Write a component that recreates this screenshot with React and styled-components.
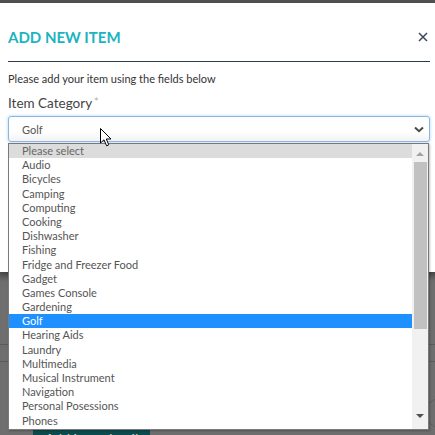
import React from "react";
import styled, { createGlobalStyle } from "styled-components";

const GlobalStyle = createGlobalStyle`
  html, body { margin: 0; padding: 0; }
  body {
    background: #6e6e6e;
    font-family: Lato, "Open Sans", "Liberation Sans", sans-serif;
  }
  * { box-sizing: border-box; }
`;

const Page = styled.div`
  position: relative;
  width: 435px;
  height: 435px;
  overflow: hidden;
  background: #6e6e6e;
`;

const TopStrip = styled.div`
  height: 3px;
  background: #535353;
`;

const Modal = styled.div`
  background: #ffffff;
  height: 269px;
  padding: 0 5px 0 8px;
  display: flex;
  flex-direction: column;
  box-shadow: 0 3px 8px rgba(0, 0, 0, 0.35);
  position: relative;
  z-index: 1;
`;

const Header = styled.div`
  display: flex;
  align-items: center;
  justify-content: space-between;
  height: 59px;
  padding-top: 9px;
  border-bottom: 1.5px solid #2f3b50;
`;

const Title = styled.h2`
  margin: 0;
  font-size: 15px;
  font-weight: 700;
  color: #1cb3c0;
  letter-spacing: 0;
`;

const Close = styled.button`
  border: 0;
  background: none;
  padding: 0;
  margin-right: 2px;
  width: 10px;
  height: 10px;
  display: flex;
  color: #3c4658;
`;

const Intro = styled.p`
  margin: 10px 0 0;
  font-size: 11px;
  color: #333;
`;

const Label = styled.div`
  margin-top: 10px;
  font-size: 13.5px;
  color: #444;
  display: flex;
  align-items: flex-start;
  gap: 2px;
`;

const Req = styled.span`
  font-size: 11px;
  color: #b0b0b0;
  margin-top: 0;
`;

const SelectBox = styled.div`
  margin-top: 5px;
  height: 26px;
  border: 1px solid #86b7e8;
  border-radius: 3px;
  box-shadow: 0 0 3px rgba(100, 160, 230, 0.55);
  background: linear-gradient(#ffffff 60%, #f3f3f3);
  display: flex;
  align-items: center;
  justify-content: space-between;
  padding: 0 5px 0 13px;
  font-size: 11px;
  color: #555;
`;

const Backdrop = styled.div`
  position: relative;
  height: 163px;
  padding-top: 72px;
  background: linear-gradient(#565656, #6e6e6e 9px);
`;

const Rule = styled.div`
  height: 1px;
  background: #5b5b5b;
  margin-bottom: ${(p) => p.gap || 0}px;
`;

const Ghost = styled.div`
  margin: 0 0 0 33px;
  width: 117px;
  height: 20px;
  background: #0c4b4e;
  color: #c9d7d8;
  font-size: 14px;
  padding: 3px 0 0 12px;
`;

const Ring = styled.div`
  position: absolute;
  right: -20px;
  top: 126px;
  width: 30px;
  height: 30px;
  border: 1px solid #5e5e5e;
  border-radius: 50%;
`;

const ListBox = styled.div`
  position: absolute;
  left: 8px;
  top: 143px;
  width: 421px;
  height: 287px;
  border: 1px solid #7a7a7a;
  background: #fff;
  display: flex;
  box-shadow: 1px 1px 2px rgba(0, 0, 0, 0.25);
  z-index: 2;
`;

const Options = styled.ul`
  list-style: none;
  margin: 0;
  padding: 0;
  flex: 1;
`;

const Option = styled.li`
  height: 14.2px;
  line-height: 14.2px;
  font-size: 11px;
  padding-left: 13px;
  white-space: nowrap;
  color: ${(p) => (p.$selected ? "#ffffff" : p.$placeholder ? "#666" : "#555")};
  background: ${(p) =>
    p.$selected ? "#1e90ff" : p.$placeholder ? "#dcdcdc" : "transparent"};
`;

const Scrollbar = styled.div`
  width: 16px;
  background: #f1f1f1;
  display: flex;
  flex-direction: column;
  align-items: center;
  padding: 0 0 4px;
`;

const Arrow = styled.div`
  height: 18px;
  width: 16px;
  display: flex;
  align-items: center;
  justify-content: center;
`;

const Track = styled.div`
  flex: 1;
  width: 13px;
`;

const Thumb = styled.div`
  height: 167px;
  background: #c1c1c1;
`;

const Cursor = styled.svg`
  position: absolute;
  left: 100px;
  top: 128px;
  z-index: 3;
`;

const items = [
  "Please select",
  "Audio",
  "Bicycles",
  "Camping",
  "Computing",
  "Cooking",
  "Dishwasher",
  "Fishing",
  "Fridge and Freezer Food",
  "Gadget",
  "Games Console",
  "Gardening",
  "Golf",
  "Hearing Aids",
  "Laundry",
  "Multimedia",
  "Musical Instrument",
  "Navigation",
  "Personal Posessions",
  "Phones",
];

export default function App() {
  return (
    <Page>
      <GlobalStyle />
      <TopStrip />
      <Modal>
        <Header>
          <Title>ADD NEW ITEM</Title>
          <Close aria-label="close">
            <svg width="10" height="10" viewBox="0 0 10 10">
              <path d="M1 1 L9 9 M9 1 L1 9" stroke="currentColor" strokeWidth="1.5" />
            </svg>
          </Close>
        </Header>
        <Intro>Please add your item using the fields below</Intro>
        <Label>
          Item Category<Req>*</Req>
        </Label>
        <SelectBox>
          <span>Golf</span>
          <svg width="10" height="7" viewBox="0 0 10 7">
            <path d="M1 1.5 L5 5.2 L9 1.5" fill="none" stroke="#4a4a4a" strokeWidth="2" />
          </svg>
        </SelectBox>
      </Modal>
      <Backdrop>
        <Rule gap={16} />
        <Rule gap={65} />
        <Ghost>Add item details</Ghost>
        <Ring />
      </Backdrop>
      <ListBox>
        <Options>
          {items.map((it, i) => (
            <Option key={it} $placeholder={i === 0} $selected={it === "Golf"}>
              {it}
            </Option>
          ))}
        </Options>
        <Scrollbar>
          <Arrow>
            <svg width="8" height="5" viewBox="0 0 8 5">
              <path d="M0 5 L4 1 L8 5 Z" fill="#a3a3a3" />
            </svg>
          </Arrow>
          <Track>
            <Thumb />
          </Track>
          <Arrow>
            <svg width="8" height="5" viewBox="0 0 8 5">
              <path d="M0 0 L8 0 L4 4 Z" fill="#505050" />
            </svg>
          </Arrow>
        </Scrollbar>
      </ListBox>
      <Cursor width="12" height="19" viewBox="0 0 12 19">
        <path
          d="M0.5 0.5 L0.5 15 L4 11.8 L6.6 17.8 L8.8 16.8 L6.3 11 L11 11 Z"
          fill="#fff"
          stroke="#000"
          strokeWidth="1"
          strokeLinejoin="round"
        />
      </Cursor>
    </Page>
  );
}
